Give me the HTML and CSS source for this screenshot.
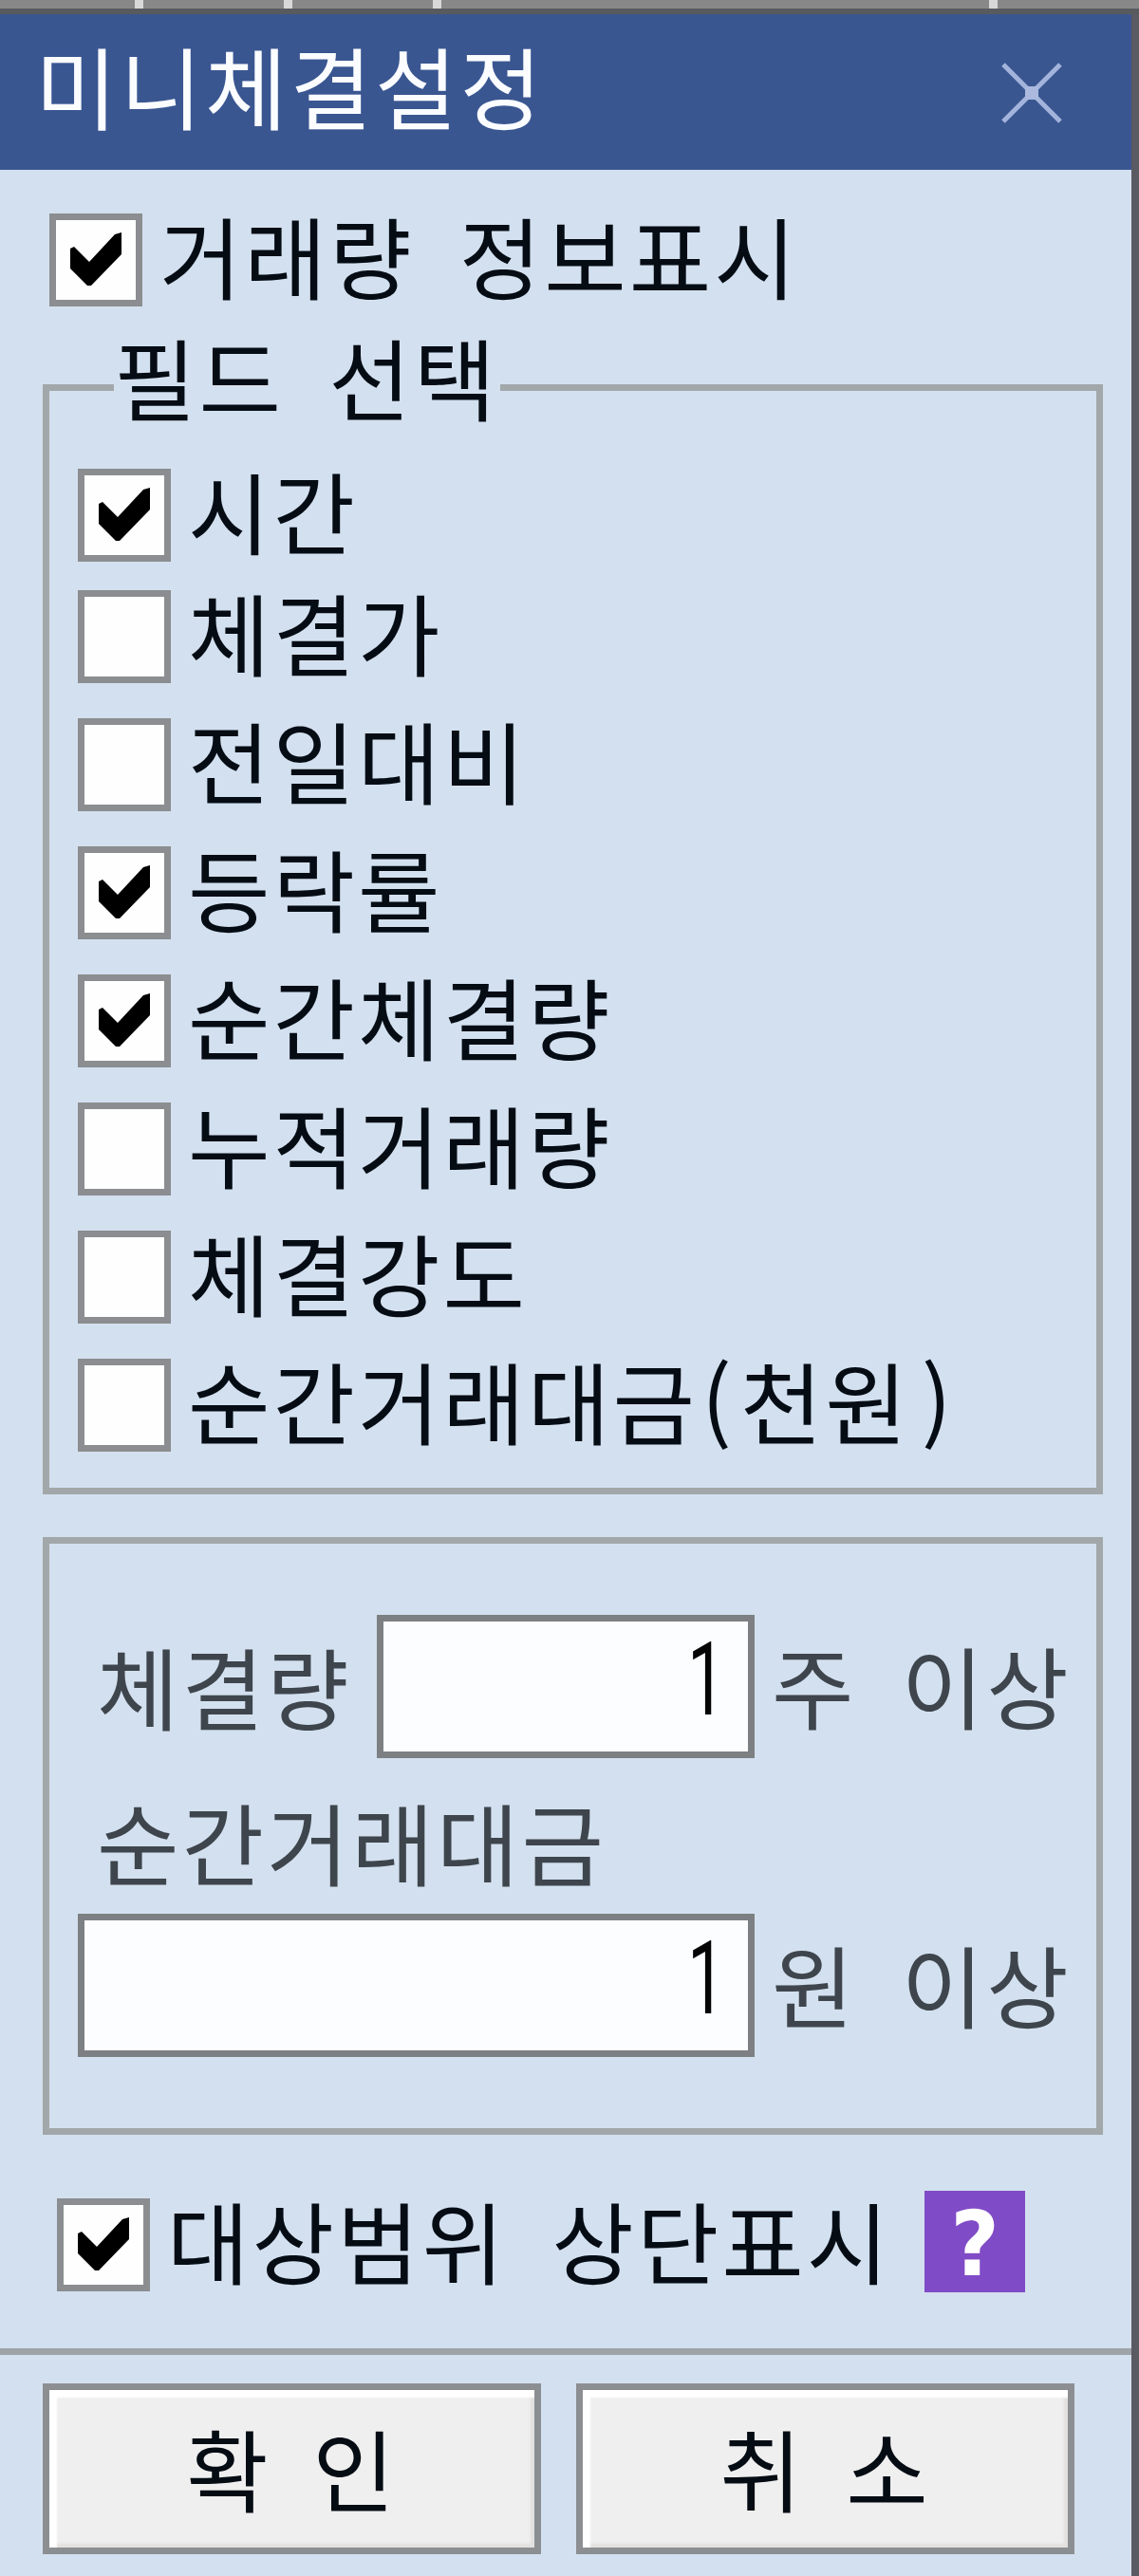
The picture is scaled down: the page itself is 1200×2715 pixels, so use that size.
FILE: index.html
```
<!DOCTYPE html>
<html lang="ko">

<head>
    <meta charset="utf-8">
    <meta name="viewport" content="width=device-width, initial-scale=1.0">
    <title>미니체결설정</title>
    <link rel="stylesheet" href="styles.css">
</head>

<body>
    <div class="strip">
        <i class="tick"></i>
        <i class="tick"></i>
        <i class="tick"></i>
        <i class="tick last"></i>
    </div>

    <div class="dialog">
        <header class="titlebar">
            <h1 class="title">미니체결설정</h1>
            <svg class="close" viewBox="0 0 66 66">
                <path d="M3 3L63 63M63 3L3 63" />
                <rect x="26" y="26" width="14" height="14" />
            </svg>
        </header>

        <main>
            <div class="row info">
                <span class="box checked"></span>
                <span class="label">거래량 정보표시</span>
            </div>

            <fieldset class="group fields">
                <legend>필드 선택</legend>
                <div class="row first"><span class="box checked"></span><span class="label">시간</span></div>
                <div class="row"><span class="box"></span><span class="label">체결가</span></div>
                <div class="row"><span class="box"></span><span class="label">전일대비</span></div>
                <div class="row"><span class="box checked"></span><span class="label">등락률</span></div>
                <div class="row"><span class="box checked"></span><span class="label">순간체결량</span></div>
                <div class="row"><span class="box"></span><span class="label">누적거래량</span></div>
                <div class="row"><span class="box"></span><span class="label">체결강도</span></div>
                <div class="row"><span class="box"></span><span class="label">순간거래대금<span class="paren">(</span>천원<span class="paren close-paren">)</span></span></div>
            </fieldset>

            <section class="group limits">
                <div class="limit">
                    <span class="text">체결량</span>
                    <div class="input"><span class="num">1</span></div>
                    <span class="unit">주 이상</span>
                </div>
                <div class="text amount">순간거래대금</div>
                <div class="limit">
                    <div class="input wide"><span class="num">1</span></div>
                    <span class="unit">원 이상</span>
                </div>
            </section>

            <div class="row range">
                <span class="box checked"></span>
                <span class="label">대상범위 상단표시</span>
                <span class="help"><span class="mark">?</span></span>
            </div>
        </main>

        <footer>
            <div class="button">확 인</div>
            <div class="button">취 소</div>
        </footer>
    </div>

    <script>
        // check mark in the selected boxes
        document.querySelectorAll(".checked").forEach(elm => {
            elm.innerHTML = `<svg viewBox="0 0 84 84"><path d="M15 30L19 28L35 44L62 15L69 13V36L37 69H33L15 51Z"/></svg>`;
        })
    </script>
</body>

</html>
```
FILE: styles.css
```
* {
    box-sizing: border-box;
}

body {
    margin: 0;
    width: 1200px;
    height: 2715px;
    overflow: hidden;
    background: #5a5a62;
    font-family: "Noto Sans CJK KR", "Noto Sans", sans-serif;
    font-size: 94px;
    line-height: 98px;
    letter-spacing: 3px;
    word-spacing: 18px;
    white-space: nowrap;
    color: #050c14;
}

.strip {
    display: flex;
    gap: 148px;
    height: 15px;
    padding-left: 142px;
    background: #888;
    border-bottom: 6px solid #575b5d;
}

.tick {
    width: 9px;
    background: #d8d8d8;
}

.tick.last {
    margin-left: 429px;
}

.dialog {
    width: 1192px;
    height: 2700px;
    background: #d3e0ef;
}

.titlebar {
    display: flex;
    justify-content: space-between;
    height: 164px;
    padding: 26px 72px 0 37px;
    background: #3a5691;
}

.title {
    margin: -1px 0 0;
    font-size: inherit;
    font-weight: 400;
    line-height: 98px;
    color: #fafcff;
}

.close {
    width: 66px;
    height: 66px;
    margin-top: 24px;
    fill: #aab9dd;
    stroke: #a3b4dc;
    stroke-width: 5;
}

.close rect {
    stroke: none;
}

main {
    height: 2296px;
    padding: 46px 30px 0 45px;
}

.row {
    display: flex;
    height: 98px;
    margin-bottom: 37px;
}

.box {
    flex: none;
    width: 98px;
    height: 98px;
    border: 7px solid #8b8d90;
    background: #fefefe;
}

.box svg {
    display: block;
    width: 84px;
    height: 84px;
}

.label {
    margin: -6px 0 0 18px;
}

.info {
    margin: 0 0 34px 7px;
}

.group {
    margin: 0;
    border: 7px solid #a2a7a9;
    width: 1117px;
}

.fields {
    height: 1218px;
    padding: 0 0 0 30px;
}

.fields legend {
    height: 103px;
    margin-left: 38px;
    padding: 0 2px 0 0;
    line-height: 78px;
}

.fields .first {
    margin: 34px 0 30px;
}

.paren {
    letter-spacing: 13px;
}

.paren:not(.close-paren) {
    margin-left: 4px;
    letter-spacing: 9px;
}

.close-paren {
    margin-left: 12px;
}

.limits {
    height: 630px;
    margin-top: 45px;
    padding: 75px 0 0 30px;
    color: #3e454c;
}

.limit {
    display: flex;
    height: 151px;
}

.text {
    width: 295px;
    padding-left: 20px;
}

.limit .text {
    margin-right: 20px;
    padding-top: 25px;
}

.amount {
    height: 164px;
    padding-top: 38px;
}

.input {
    width: 398px;
    height: 151px;
    padding: 8px 24px 0 0;
    border: 7px solid #7d8082;
    background: #fbfdff;
    text-align: right;
    color: #050505;
}

.input.wide {
    width: 713px;
}

.num {
    display: inline-block;
    font-family: Roboto, sans-serif;
    font-size: 108px;
    letter-spacing: 0;
    transform: scaleX(.65);
    transform-origin: right;
}

.unit {
    padding: 24px 0 0 18px;
}

.range {
    margin: 67px 0 0 15px;
}

.help {
    width: 106px;
    height: 107px;
    margin: -8px 0 0 35px;
    background: #804bc6;
    color: #fff;
    font-family: "DejaVu Sans", sans-serif;
    font-size: 94px;
    font-weight: 700;
    line-height: 114px;
    letter-spacing: 0;
    text-align: center;
}

.mark {
    display: inline-block;
    transform: scaleX(.95);
}

footer {
    display: flex;
    gap: 37px;
    height: 240px;
    padding: 30px 45px 0;
    border-top: 7px solid #9da3a7;
}

.button {
    width: 525px;
    height: 180px;
    padding-top: 32px;
    border: 7px solid #8c8f92;
    background: #efefef;
    box-shadow: inset 8px 8px 2px #fff, inset -4px -4px 3px #e2e0de;
    text-align: center;
    word-spacing: 14px;
}
```
